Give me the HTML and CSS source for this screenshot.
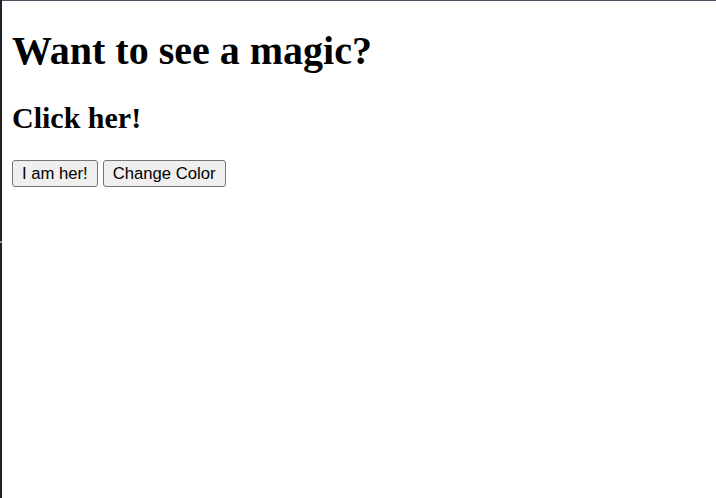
FILE: index.html
```html
<!DOCTYPE html>
<html lang="en">
<head>
<meta charset="utf-8">
<title>Magic</title>
<link rel="stylesheet" href="styles.css">
</head>
<body>
<div class="edge"><span class="edge-mark"></span></div>
<main class="page">
  <h1 class="title">Want to see a magic?</h1>
  <h2 class="subtitle">Click her!</h2>
  <div class="actions">
    <button class="btn" type="button">I am her!</button>
    <button class="btn" type="button">Change Color</button>
  </div>
</main>
</body>
</html>
```

FILE: styles.css
```css
html, body {
  margin: 0;
  padding: 0;
  height: 100%;
  background: #ffffff;
}
body {
  display: flex;
  font-family: "Liberation Serif", "Times New Roman", serif;
  font-size: 20px;
  color: #000000;
  overflow: hidden;
}
.edge {
  width: 2px;
  flex: none;
  background: #1f2327;
  display: flex;
  flex-direction: column;
  padding-top: 241px;
  box-sizing: border-box;
}
.edge-mark {
  display: block;
  height: 2px;
  background: #8b9095;
}
.page {
  flex: 1;
  border-top: 1px solid #4c5360;
  padding: 0 10px;
  box-sizing: border-box;
}
.title {
  font-size: 40px;
  font-weight: bold;
  line-height: 46px;
  margin: 26.8px 0;
}
.subtitle {
  font-size: 30px;
  font-weight: bold;
  line-height: 34.5px;
  margin: 24.9px 0;
}
.actions {
  display: flex;
  gap: 5px;
}
.btn {
  font-family: "Liberation Sans", Arial, sans-serif;
  font-size: 16.67px;
  line-height: 19.2px;
  color: #000000;
  background: #efefef;
  border: 1px solid #767676;
  border-radius: 3px;
  padding: 2.75px 9px;
  margin: 0;
}
```
